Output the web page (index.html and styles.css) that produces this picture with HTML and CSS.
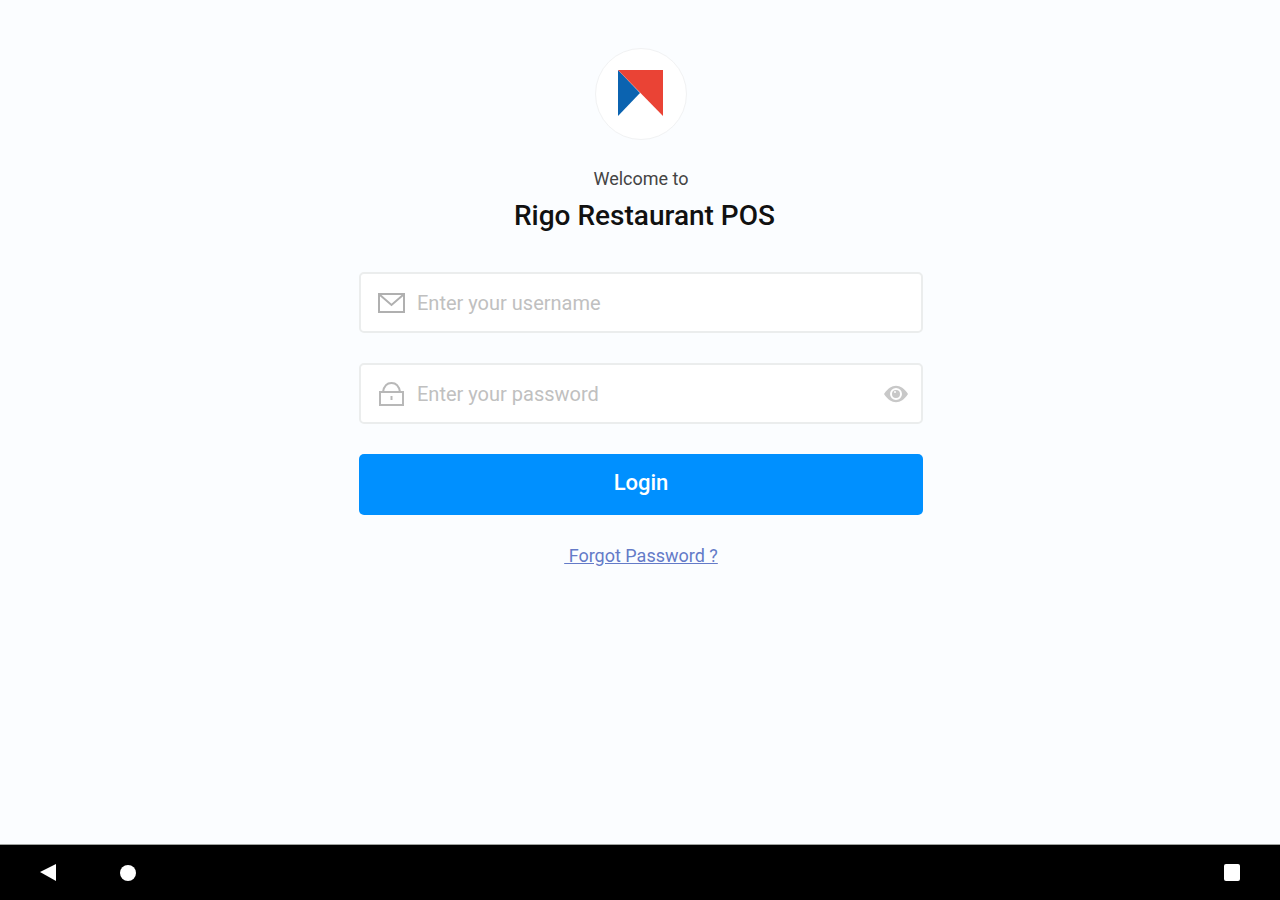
FILE: index.html
```html
<!DOCTYPE html>
<html lang="en">
<head>
  <meta charset="UTF-8">
  <meta name="viewport" content="width=device-width, initial-scale=1">
  <title>Rigo Restaurant POS</title>
  <link rel="stylesheet" href="styles.css">
</head>
<body>

  <main class="login">
    <div class="logo">
      <svg width="46" height="48" viewBox="0 0 46 48" aria-hidden="true">
        <path d="M0 0 L22 23 L0 46 Z" fill="#0b63b0"/>
        <path d="M0 0 H45 V46 Z" fill="#ea4335"/>
      </svg>
    </div>

    <p class="welcome">Welcome to</p>
    <h1 class="title">&nbsp;Rigo Restaurant POS</h1>

    <form class="login-form">
      <div class="field">
        <label for="username" aria-label="Username">
          <svg width="28" height="28" viewBox="0 0 28 28" fill="none" stroke="#b0b0b0" stroke-width="2">
            <rect x="1" y="5" width="25" height="18"/>
            <path d="M2 6 L13.500 16 L25 6"/>
          </svg>
        </label>
        <input type="text" id="username" name="username" placeholder="Enter your username">
      </div>

      <div class="field">
        <label for="password" aria-label="Password">
          <svg width="28" height="28" viewBox="0 0 28 28" fill="none" stroke="#b8b8b8" stroke-width="2">
            <rect x="2" y="12" width="23" height="13"/>
            <path d="M5 12 C6 6 9 3 13.500 3 C18 3 21 6 22 12"/>
            <path d="M13.500 16 V20"/>
          </svg>
        </label>
        <input type="password" id="password" name="password" placeholder="Enter your password">
        <button type="button" class="toggle" id="toggle" aria-label="Show password">
          <svg width="24" height="20" viewBox="0 0 24 20">
            <path d="M0 10 C7 -1 17 -1 24 10 C17 21 7 21 0 10 Z" fill="#c8c8c8"/>
            <circle cx="12" cy="10" r="5" fill="none" stroke="#fff" stroke-width="2"/>
            <circle cx="11" cy="8" r="1" fill="#fff"/>
          </svg>
        </button>
      </div>

      <button type="submit" class="submit">Login</button>
    </form>

    <a class="forgot" href="#">&nbsp;Forgot Password ?</a>
  </main>

  <!-- Android navigation bar -->
  <nav class="navbar">
    <button type="button" aria-label="Back">
      <svg width="18" height="18" viewBox="0 0 18 18" fill="#fff"><path d="M1 8 L17 0 V17 Z"/></svg>
    </button>
    <button type="button" aria-label="Home">
      <svg width="18" height="18" viewBox="0 0 18 18" fill="#fff"><circle cx="9" cy="9" r="8"/></svg>
    </button>
    <button type="button" class="recent" aria-label="Recent apps">
      <svg width="18" height="18" viewBox="0 0 18 18" fill="#fff"><rect x="1" y="0" width="16" height="17" rx="2"/></svg>
    </button>
  </nav>

  <script>
    // Show or hide the password
    document.getElementById('toggle').addEventListener('click', function() {
      const password = document.getElementById('password');
      password.type = password.type === 'password' ? 'text' : 'password';
    });
  </script>

</body>
</html>
```

FILE: styles.css
```css
* {
  box-sizing: border-box;
}
body {
  display: flex;
  flex-direction: column;
  min-height: 100vh;
  margin: 0;
  font-family: Roboto, sans-serif;
  background-color: #fbfdff;
}
.login {
  flex: 1;
  display: flex;
  flex-direction: column;
  align-items: center;
  padding: 48px 16px 48px 18px;
}
.logo {
  display: flex;
  align-items: center;
  justify-content: center;
  width: 92px;
  height: 92px;
  background-color: #fff;
  border: 1px solid #f1f2f3;
  border-radius: 50%;
}
.welcome {
  margin: 28px 0 0;
  font-size: 18px;
  line-height: 22px;
  color: #444;
}
.title {
  margin: 8px 0 0;
  font-size: 28px;
  font-weight: 500;
  line-height: 36px;
  color: #111;
}
.login-form {
  display: flex;
  flex-direction: column;
  gap: 30px;
  width: 100%;
  max-width: 564px;
  margin-top: 38px;
}
.field {
  display: flex;
  align-items: center;
  height: 61px;
  padding: 0 13px 0 17px;
  background-color: #fff;
  border: 2px solid #ebeded;
  border-radius: 5px;
}
.field svg {
  display: block;
}
.field input {
  flex: 1;
  min-width: 0;
  height: 100%;
  padding: 0 11px;
  font-family: inherit;
  font-size: 20px;
  color: #333;
  background: none;
  border: none;
  outline: none;
}
.field input::placeholder {
  color: #c0c0c0;
}
.toggle {
  padding: 0;
  background: none;
  border: none;
  cursor: pointer;
}
.submit {
  height: 61px;
  padding: 0 0 4px;
  font-family: inherit;
  font-size: 22px;
  font-weight: 500;
  color: #fff;
  background-color: #0090ff;
  border: none;
  border-radius: 5px;
  cursor: pointer;
}
.submit:hover {
  background-color: #0082e6;
}
.forgot {
  margin-top: 30px;
  font-size: 18px;
  line-height: 22px;
  color: #647bc8;
}
.navbar {
  display: flex;
  align-items: center;
  gap: 62px;
  height: 56px;
  padding: 0 39px;
  background-color: #000;
  border-top: 1px solid #a0a3a0;
}
.navbar button {
  padding: 0;
  background: none;
  border: none;
}
.navbar svg {
  display: block;
}
.navbar .recent {
  margin-left: auto;
}
```
